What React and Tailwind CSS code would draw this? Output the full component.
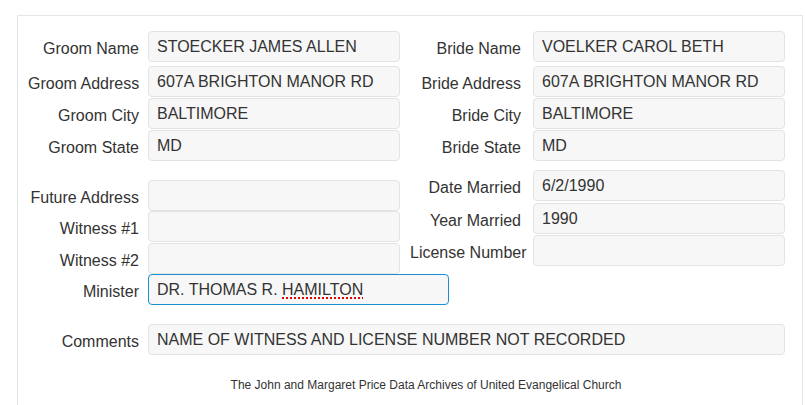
import React from 'react';

const Field = ({ label, value, wide, focused, className = '' }) => (
    <div className={`flex items-center ${className}`}>
        <label className="w-[111px] shrink-0 whitespace-nowrap text-right pt-[4px]">{label}</label>
        <div
            className={`ml-[9px] h-[31px] shrink-0 flex items-center px-2 rounded-[4px] bg-[#f7f7f7] border ${
                focused ? 'border-[#1a8fd4]' : 'border-[#e3e3e3]'
            } ${wide ? 'w-[301px]' : 'w-[252px]'}`}
        >
            {value}
        </div>
    </div>
);

const RightField = ({ label, value, className = '' }) => (
    <div className={`flex items-center ${className}`}>
        <label className="w-[111px] shrink-0 whitespace-nowrap text-right pt-[4px]">{label}</label>
        <div className="ml-[12px] h-[31px] w-[252px] shrink-0 flex items-center px-2 rounded-[4px] bg-[#f7f7f7] border border-[#e3e3e3]">
            {value}
        </div>
    </div>
);

const App = () => {
    return (
        <div className="min-h-[405px] bg-white pt-[15px] pl-[17px] pr-[2px] overflow-hidden text-[16px] text-[#333] font-['Liberation_Sans',Arial,sans-serif]">
            <div className="border border-[#e6e6e6] pt-[15px] pl-[10px] pb-[40px]">
                {/* Groom / Bride */}
                <div className="flex">
                    <div className="flex flex-col w-[372px] shrink-0">
                        <Field label="Groom Name" value="STOECKER JAMES ALLEN" className="mb-[4px]" />
                        <Field label="Groom Address" value="607A BRIGHTON MANOR RD" className="mb-[1px]" />
                        <Field label="Groom City" value="BALTIMORE" className="mb-[1px]" />
                        <Field label="Groom State" value="MD" />
                    </div>
                    <div className="flex flex-col ml-[10px]">
                        <RightField label="Bride Name" value="VOELKER CAROL BETH" className="mb-[4px]" />
                        <RightField label="Bride Address" value="607A BRIGHTON MANOR RD" className="mb-[1px]" />
                        <RightField label="Bride City" value="BALTIMORE" className="mb-[1px]" />
                        <RightField label="Bride State" value="MD" />
                    </div>
                </div>

                {/* Other details */}
                <div className="flex items-start">
                    <div className="flex flex-col w-[372px] shrink-0 pt-[19px]">
                        <Field label="Future Address" value="" />
                        <Field label="Witness #1" value="" className="mb-px" />
                        <Field label="Witness #2" value="" />
                        <Field
                            label="Minister"
                            wide
                            focused
                            value={
                                <span>
                                    DR. THOMAS R.{' '}
                                    <span className="underline decoration-dotted decoration-[#e00000] decoration-[1.5px] underline-offset-[3px]">
                                        HAMILTON
                                    </span>
                                </span>
                            }
                        />
                    </div>
                    <div className="flex flex-col ml-[10px] pt-[9px]">
                        <RightField label="Date Married" value="6/2/1990" className="mb-[2px]" />
                        <RightField label="Year Married" value="1990" className="mb-[1px]" />
                        <RightField label="License Number" value="" />
                    </div>
                </div>

                {/* Comments */}
                <div className="flex items-center mt-[19px]">
                    <label className="w-[111px] shrink-0 text-right pt-[4px]">Comments</label>
                    <div className="ml-[9px] h-[31px] w-[637px] shrink-0 flex items-center px-2 rounded-[4px] bg-[#f7f7f7] border border-[#e3e3e3]">
                        NAME OF WITNESS AND LICENSE NUMBER NOT RECORDED
                    </div>
                </div>

                <div className="pl-[22px] mt-[21px] text-center text-[12px]">
                    The John and Margaret Price Data Archives of United Evangelical Church
                </div>
            </div>
        </div>
    );
};

export default App;
